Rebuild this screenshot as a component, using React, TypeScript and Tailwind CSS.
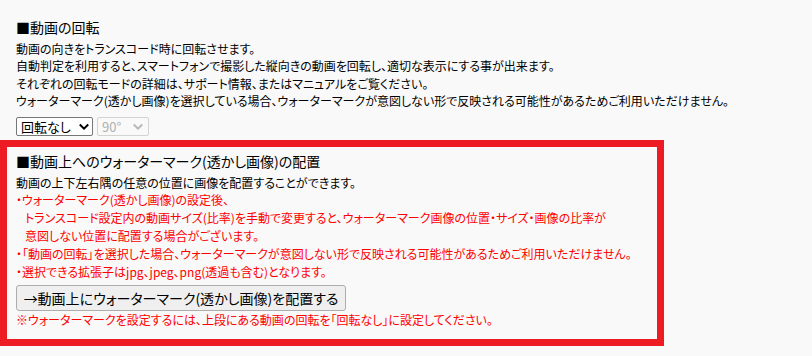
import React from "react";

const jp = { fontFamily: '"Noto Sans CJK JP", sans-serif' };

function Chevron({ className }: { className: string }) {
  return (
    <svg viewBox="0 0 10 10" className={className} fill="none" stroke="currentColor" strokeWidth="2" strokeLinecap="square">
      <path d="M1.5 3.2 L5 6.7 L8.5 3.2" />
    </svg>
  );
}

export default function App() {
  return (
    <div
      className="w-[812px] h-[356px] bg-[#f9f9f9] text-black overflow-hidden [font-feature-settings:'palt']"
      style={jp}
    >
      <div className="pl-4 pt-[18px]">
        <div className="text-[14px] leading-[18px]">■動画の回転</div>
        <div className="mt-[4px] text-[12px] leading-[17.3px]">
          <div>動画の向きをトランスコード時に回転させます。</div>
          <div>自動判定を利用すると、スマートフォンで撮影した縦向きの動画を回転し、適切な表示にする事が出来ます。</div>
          <div>それぞれの回転モードの詳細は、サポート情報、またはマニュアルをご覧ください。</div>
          <div>ウォーターマーク(透かし画像)を選択している場合、ウォーターマークが意図しない形で反映される可能性があるためご利用いただけません。</div>
        </div>
        <div className="mt-[8px] flex gap-[4px]">
          <div className="h-[19px] w-[77px] flex items-center justify-between border border-[#767676] rounded-[2px] bg-white pl-[4px] pr-[3px] text-[13px] leading-none">
            <span>回転なし</span>
            <Chevron className="w-[10px] h-[10px] text-black" />
          </div>
          <div className="h-[19px] w-[52px] flex items-center justify-between border border-[#d3d3d3] rounded-[2px] bg-[#f9f9f9] pl-[4px] pr-[5px] text-[13px] leading-none text-[#b0b0b0]">
            <span>90°</span>
            <Chevron className="w-[10px] h-[10px] text-[#b8b8b8]" />
          </div>
        </div>
      </div>
      <div className="mt-[4px] w-[664px] border-[7px] border-[#ed1c24] pl-[9px] pt-[5px] pb-[10px]">
        <div className="text-[14px] leading-[18px]">■動画上へのウォーターマーク(透かし画像)の配置</div>
        <div className="mt-[4px] text-[12px] leading-[17px]">動画の上下左右隅の任意の位置に画像を配置することができます。</div>
        <div className="text-[12px] leading-[18px] text-[#ff0000]">
          <div>・ウォーターマーク(透かし画像)の設定後、</div>
          <div className="pl-[9px]">トランスコード設定内の動画サイズ(比率)を手動で変更すると、ウォーターマーク画像の位置・サイズ・画像の比率が</div>
          <div className="pl-[9px]">意図しない位置に配置する場合がございます。</div>
          <div>・「動画の回転」を選択した場合、ウォーターマークが意図しない形で反映される可能性があるためご利用いただけません。</div>
          <div>・選択できる拡張子はjpg、jpeg、png(透過も含む)となります。</div>
        </div>
        <button
          className="mt-[4px] h-[26px] w-[330px] border border-[#adadad] rounded-[3px] bg-[#efefef] text-[14px] leading-none text-black"
          style={jp}
        >
          →動画上にウォーターマーク(透かし画像)を配置する
        </button>
        <div className="text-[12px] leading-[18px] text-[#ff0000]">
          ※ウォーターマークを設定するには、上段にある動画の回転を「回転なし」に設定してください。
        </div>
      </div>
    </div>
  );
}
